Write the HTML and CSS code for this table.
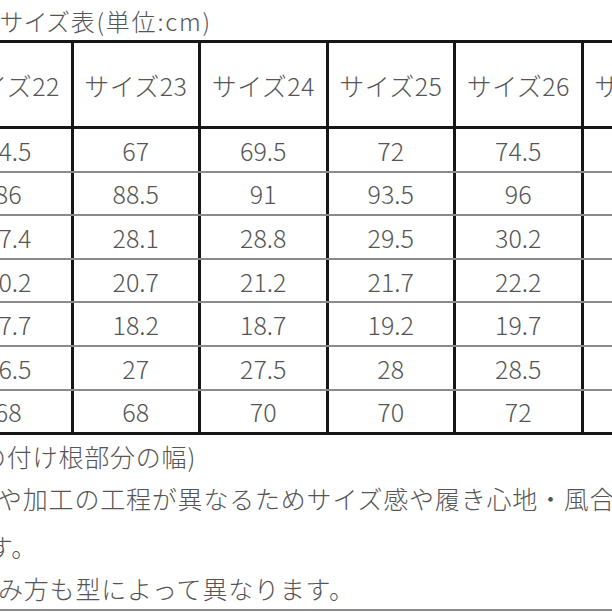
FILE: index.html
```html
<!DOCTYPE html>
<html lang="ja">
<head>
<meta charset="utf-8">
<title>サイズ表</title>
<link rel="stylesheet" href="styles.css">
</head>
<body>
<div class="page">
  <h1 class="title">サイズ表(単位:cm)</h1>
  <div class="table">
    <div class="row head">
      <div class="cell">サイズ22</div>
      <div class="cell">サイズ23</div>
      <div class="cell">サイズ24</div>
      <div class="cell">サイズ25</div>
      <div class="cell">サイズ26</div>
      <div class="cell">サイズ27</div>
    </div>
    <div class="row">
      <div class="cell">64.5</div><div class="cell">67</div><div class="cell">69.5</div><div class="cell">72</div><div class="cell">74.5</div><div class="cell">77</div>
    </div>
    <div class="row">
      <div class="cell">86</div><div class="cell">88.5</div><div class="cell">91</div><div class="cell">93.5</div><div class="cell">96</div><div class="cell">98.5</div>
    </div>
    <div class="row">
      <div class="cell">27.4</div><div class="cell">28.1</div><div class="cell">28.8</div><div class="cell">29.5</div><div class="cell">30.2</div><div class="cell">30.9</div>
    </div>
    <div class="row">
      <div class="cell">20.2</div><div class="cell">20.7</div><div class="cell">21.2</div><div class="cell">21.7</div><div class="cell">22.2</div><div class="cell">22.7</div>
    </div>
    <div class="row">
      <div class="cell">17.7</div><div class="cell">18.2</div><div class="cell">18.7</div><div class="cell">19.2</div><div class="cell">19.7</div><div class="cell">20.2</div>
    </div>
    <div class="row">
      <div class="cell">26.5</div><div class="cell">27</div><div class="cell">27.5</div><div class="cell">28</div><div class="cell">28.5</div><div class="cell">29</div>
    </div>
    <div class="row">
      <div class="cell">68</div><div class="cell">68</div><div class="cell">70</div><div class="cell">70</div><div class="cell">72</div><div class="cell">72</div>
    </div>
  </div>
  <div class="notes">
    <p class="note n1">の付け根部分の幅)</p>
    <p class="note n2">や加工の工程が異なるためサイズ感や履き心地・風合いが異なります</p>
    <p class="note n3">す。</p>
    <p class="note n4">み方も型によって異なります。</p>
  </div>
  <div class="next"></div>
</div>
</body>
</html>
```

FILE: styles.css
```css
html, body {
  margin: 0;
  padding: 0;
  background: #ffffff;
}

body {
  width: 612px;
  height: 612px;
  overflow: hidden;
  font-family: "Noto Sans CJK JP", "Noto Sans", sans-serif;
  font-weight: 300;
  color: #555555;
}

.page {
  width: 612px;
  height: 612px;
  overflow: hidden;
  display: flex;
  flex-direction: column;
}

.title {
  margin: 0;
  height: 40px;
  line-height: 42px;
  font-size: 24px;
  font-weight: 300;
  white-space: nowrap;
  font-feature-settings: "palt";
  letter-spacing: 1.8px;
}

.table {
  margin-left: -54px;
  width: max-content;
  border-top: 3px solid #161616;
  flex: none;
}

.row {
  display: flex;
  box-sizing: border-box;
  height: 43.6px;
  border-bottom: 2px solid #8a8a8a;
}

.row:last-child {
  height: 44.6px;
  border-bottom: 3px solid #161616;
}

.row.head {
  height: 86px;
  border-bottom: 3px solid #161616;
}

.cell {
  flex: none;
  box-sizing: border-box;
  width: 127.5px;
  border-right: 3px solid #161616;
  display: flex;
  align-items: center;
  justify-content: center;
  font-size: 25px;
  white-space: nowrap;
}

.head .cell {
  letter-spacing: 0.4px;
}

.notes {
  flex: none;
}

.note {
  margin: 0;
  height: 42px;
  line-height: 42px;
  font-size: 25px;
  white-space: nowrap;
  letter-spacing: 0.8px;
}

.n1 { text-indent: -19px; }
.n2 { text-indent: -3px; }
.n3 { text-indent: -12px; margin-top: 6px; }
.n4 { text-indent: -2px; }

.next {
  flex: none;
  width: 612px;
  border-top: 2px solid #8a8a8a;
}
```
